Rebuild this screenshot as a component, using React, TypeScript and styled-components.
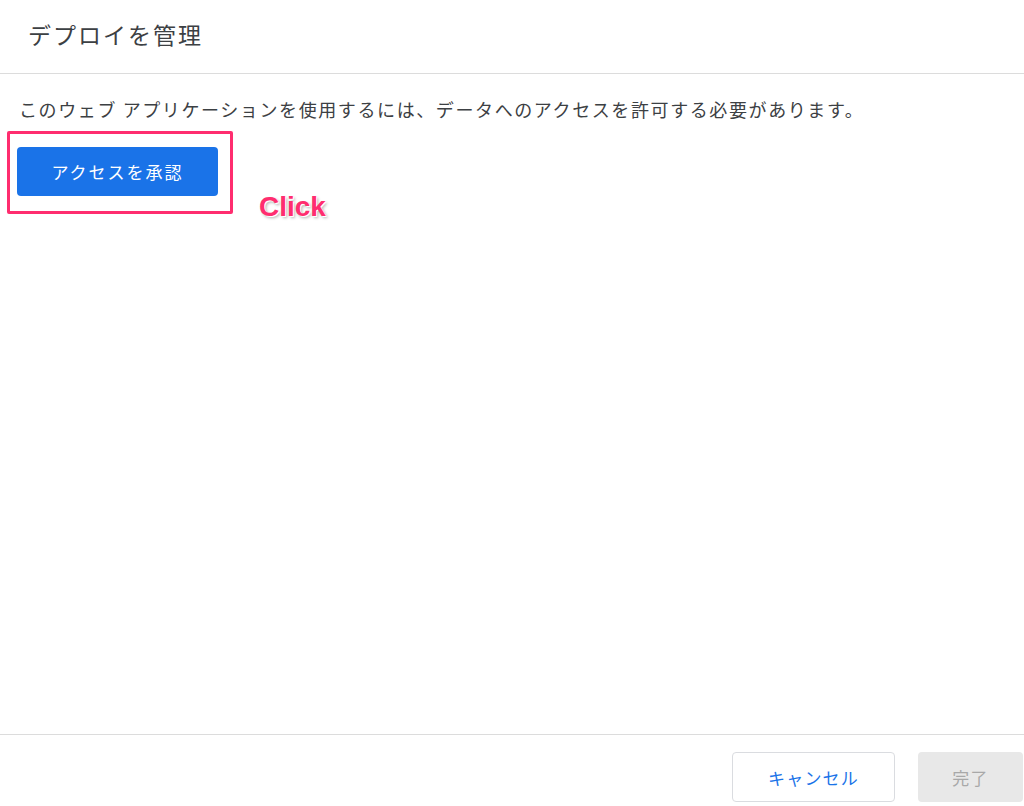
import React from 'react';
import styled, { createGlobalStyle } from 'styled-components';

const GlobalStyle = createGlobalStyle`
  html, body {
    margin: 0;
    padding: 0;
    background: #ffffff;
  }
  body {
    font-family: "Noto Sans CJK JP", "Noto Sans", Roboto, sans-serif;
  }
`;

const Dialog = styled.div`
  display: flex;
  flex-direction: column;
  height: 806px;
  width: 1024px;
  box-sizing: border-box;
`;

const Header = styled.header`
  height: 74px;
  box-sizing: border-box;
  display: flex;
  align-items: center;
  padding: 0 0 6px 28px;
  border-bottom: 1px solid #dcdcdc;
`;

const Title = styled.h1`
  margin: 0;
  font-size: 23px;
  font-weight: 400;
  letter-spacing: 2px;
  color: #3c4043;
`;

const Body = styled.main`
  flex: 1;
  padding: 22px 0 0 19px;
`;

const Message = styled.p`
  margin: 0;
  font-size: 18px;
  line-height: 26px;
  letter-spacing: 1.6px;
  color: #3c4043;
`;

const ActionRow = styled.div`
  display: flex;
  align-items: flex-end;
  margin: 9px 0 0 -12px;
`;

const Highlight = styled.div`
  display: inline-flex;
  padding: 13px 12px 15px 7px;
  border: 3px solid #ff2d6f;
  border-radius: 2px;
`;

const PrimaryButton = styled.button`
  width: 201px;
  height: 49px;
  border: none;
  border-radius: 4px;
  background: #1a73e8;
  color: #ffffff;
  font-family: inherit;
  font-size: 17px;
  letter-spacing: 2px;
  cursor: pointer;
`;

const ClickLabel = styled.span`
  margin: 0 0 -9px 26px;
  font-family: "Liberation Sans", Arial, sans-serif;
  font-weight: 700;
  font-size: 28px;
  line-height: 32px;
  color: #ff2d6f;
  text-shadow: 1px 1px 0 #ffffff, 2px 2px 3px rgba(0, 0, 0, 0.3);
`;

const Footer = styled.footer`
  border-top: 1px solid #dcdcdc;
  display: flex;
  justify-content: flex-end;
  gap: 23px;
  padding: 17px 1px 4px 0;
`;

const FooterButton = styled.button<{ $variant: 'outline' | 'disabled' }>`
  height: 50px;
  box-sizing: border-box;
  border-radius: 4px;
  font-family: inherit;
  font-size: 17px;
  letter-spacing: 1.2px;
  width: ${(p) => (p.$variant === 'outline' ? '163px' : '105px')};
  border: ${(p) => (p.$variant === 'outline' ? '1px solid #dadce0' : 'none')};
  background: ${(p) => (p.$variant === 'outline' ? '#ffffff' : '#e8e8e8')};
  color: ${(p) => (p.$variant === 'outline' ? '#1a73e8' : '#a8a8a8')};
`;

const App: React.FC = () => {
  return (
    <>
      <GlobalStyle />
      <Dialog>
        <Header>
          <Title>デプロイを管理</Title>
        </Header>
        <Body>
          <Message>
            このウェブ アプリケーションを使用するには、データへのアクセスを許可する必要があります。
          </Message>
          <ActionRow>
            <Highlight>
              <PrimaryButton>アクセスを承認</PrimaryButton>
            </Highlight>
            <ClickLabel>Click</ClickLabel>
          </ActionRow>
        </Body>
        <Footer>
          <FooterButton $variant="outline">キャンセル</FooterButton>
          <FooterButton $variant="disabled" disabled>
            完了
          </FooterButton>
        </Footer>
      </Dialog>
    </>
  );
};

export default App;
